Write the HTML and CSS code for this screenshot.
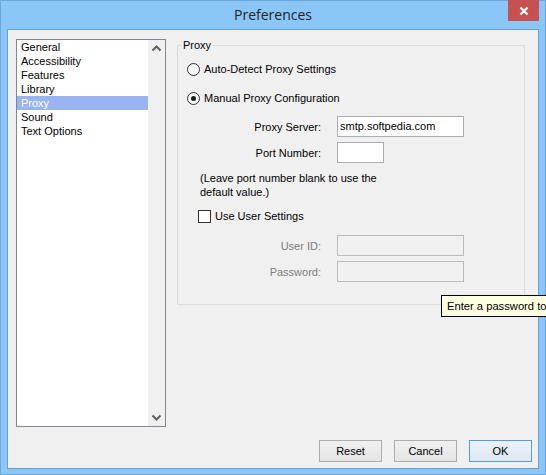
FILE: index.html
```html
<!DOCTYPE html>
<html>
<head>
<meta charset="utf-8">
<title>Preferences</title>
<link rel="stylesheet" href="styles.css">
</head>
<body>
<div class="window">
  <div class="titlebar">
    <div></div>
    <div class="title">Preferences</div>
    <div class="close"><svg width="10" height="10" viewBox="0 0 10 10"><path d="M1.5 1.5 L8.5 8.5 M8.5 1.5 L1.5 8.5" stroke="#fff" stroke-width="2.2" fill="none"/></svg></div>
  </div>
  <div class="client">
    <div class="main">
      <div class="listbox">
        <div class="items">
          <div class="item">General</div>
          <div class="item">Accessibility</div>
          <div class="item">Features</div>
          <div class="item">Library</div>
          <div class="item selected">Proxy</div>
          <div class="item">Sound</div>
          <div class="item">Text Options</div>
        </div>
        <div class="scrollbar">
          <svg class="arrow" width="17" height="17" viewBox="0 0 17 17"><path d="M4.5 10.5 L8.5 6.5 L12.5 10.5" stroke="#606060" stroke-width="2" fill="none"/></svg>
          <svg class="arrow" width="17" height="17" viewBox="0 0 17 17"><path d="M4.5 6.5 L8.5 10.5 L12.5 6.5" stroke="#606060" stroke-width="2" fill="none"/></svg>
        </div>
      </div>
      <div class="group">
        <span class="legend">Proxy</span>
        <div class="radio-row r1"><span class="radio"></span><span>Auto-Detect Proxy Settings</span></div>
        <div class="radio-row r2"><span class="radio checked"></span><span>Manual Proxy Configuration</span></div>
        <div class="field f1"><span class="label">Proxy Server:</span><span class="input wide">smtp.softpedia.com</span></div>
        <div class="field f2"><span class="label">Port Number:</span><span class="input narrow"></span></div>
        <div class="note">(Leave port number blank to use the<br>default value.)</div>
        <div class="check-row"><span class="checkbox"></span><span>Use User Settings</span></div>
        <div class="field f3 disabled"><span class="label">User ID:</span><span class="input wide"></span></div>
        <div class="field f4 disabled"><span class="label">Password:</span><span class="input wide"></span></div>
      </div>
    </div>
    <div class="buttons">
      <div class="btn">Reset</div>
      <div class="btn">Cancel</div>
      <div class="btn default">OK</div>
    </div>
  </div>
  <div class="tooltip">Enter a password to</div>
</div>
</body>
</html>
```

FILE: styles.css
```css
html, body {
  margin: 0;
  padding: 0;
  width: 546px;
  height: 475px;
  overflow: hidden;
}
body {
  font-family: "Liberation Sans", Arial, sans-serif;
  font-size: 11px;
  color: #000;
}
.window {
  position: relative;
  width: 546px;
  height: 475px;
  box-sizing: border-box;
  border: 1px solid #6ea5dc;
  background: #8bc6f8;
  display: flex;
  flex-direction: column;
}
.titlebar {
  height: 28px;
  display: grid;
  grid-template-columns: 1fr auto 1fr;
  align-items: start;
}
.title {
  font-family: "Open Sans", "Noto Sans", sans-serif;
  font-size: 14px;
  line-height: 28px;
  color: #222;
}
.close {
  justify-self: end;
  width: 31px;
  height: 21px;
  margin-top: -1px;
  margin-right: 6px;
  background: #c75050;
  display: flex;
  align-items: center;
  justify-content: center;
}
.close svg { display: block; }
.client {
  flex: 1;
  margin: 0 6px 5px 6px;
  border: 1px solid #6a9fd4;
  background: #f0f0f0;
  padding: 9px 6px 6px 8px;
  display: flex;
  flex-direction: column;
}
.main {
  height: 388px;
  display: flex;
  align-items: flex-start;
  gap: 11px;
}
.listbox {
  width: 150px;
  height: 388px;
  box-sizing: border-box;
  border: 1px solid #828790;
  background: #fff;
  display: flex;
}
.items {
  flex: 1;
}
.item {
  height: 14px;
  line-height: 14px;
  padding-left: 4px;
  white-space: nowrap;
}
.item.selected {
  background: #99b4f0;
  color: #fff;
}
.scrollbar {
  width: 17px;
  background: #f0f0f0;
  display: flex;
  flex-direction: column;
  justify-content: space-between;
}
.arrow { display: block; }
.group {
  position: relative;
  margin-top: 6px;
  width: 348px;
  height: 260px;
  box-sizing: border-box;
  border: 1px solid #dcdcdc;
  padding-top: 16px;
  display: flex;
  flex-direction: column;
}
.legend {
  position: absolute;
  top: -8px;
  left: 4px;
  padding: 0 1px;
  line-height: 14px;
  background: #f0f0f0;
}
.radio-row, .check-row {
  display: flex;
  align-items: center;
  gap: 4px;
  height: 14px;
  line-height: 14px;
}
.radio-row { padding-left: 9px; }
.r2 { margin-top: 15px; }
.radio {
  width: 13px;
  height: 13px;
  box-sizing: border-box;
  border: 1px solid #333;
  border-radius: 50%;
  background: linear-gradient(#f4f4f4, #ffffff);
  display: flex;
  align-items: center;
  justify-content: center;
}
.radio.checked::after {
  content: "";
  width: 5px;
  height: 5px;
  border-radius: 50%;
  background: #1a1a1a;
}
.field {
  display: grid;
  grid-template-columns: 143px auto;
  column-gap: 16px;
  align-items: center;
  height: 21px;
}
.f1 { margin-top: 11px; }
.f2 { margin-top: 5px; }
.f3 { margin-top: 12px; }
.f4 { margin-top: 5px; }
.label {
  text-align: right;
  white-space: nowrap;
}
.input {
  display: block;
  height: 21px;
  box-sizing: border-box;
  border: 1px solid #abadb3;
  background: #fff;
  line-height: 19px;
  padding-left: 2px;
  white-space: nowrap;
}
.input.wide { width: 127px; }
.input.narrow { width: 47px; }
.disabled .label { color: #7d7d7d; }
.disabled .input {
  background: #f0f0f0;
  border-color: #bcbcbc;
}
.note {
  margin-top: 8px;
  padding-left: 22px;
  line-height: 14px;
}
.check-row {
  margin-top: 10px;
  padding-left: 20px;
}
.checkbox {
  width: 13px;
  height: 13px;
  box-sizing: border-box;
  border: 1px solid #333;
  background: #fff;
}
.buttons {
  margin-top: 13px;
  display: flex;
  justify-content: flex-end;
  gap: 12px;
}
.btn {
  width: 63px;
  height: 22px;
  box-sizing: border-box;
  border: 1px solid #acacac;
  background: linear-gradient(#f0f0f0, #e5e5e5);
  text-align: center;
  line-height: 20px;
}
.btn.default {
  border-color: #4e9de6;
  background: linear-gradient(#eaf1f8, #dfe8f1);
}
.tooltip {
  position: absolute;
  left: 440px;
  top: 294px;
  height: 22px;
  box-sizing: border-box;
  border: 1px solid #000;
  border-right: none;
  background: #ffffe1;
  font-size: 11.2px;
  line-height: 20px;
  padding: 0 20px 0 5px;
  white-space: nowrap;
}
```
